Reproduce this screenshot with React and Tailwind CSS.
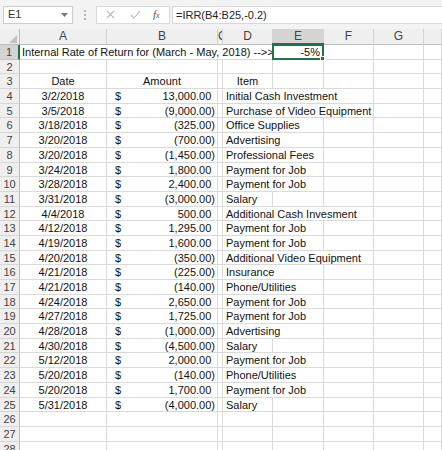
const rows = [
  ['3/2/2018', '13,000.00', false, 'Initial Cash Investment', 3],
  ['3/5/2018', '9,000.00', true, 'Purchase of Video Equipment', 3],
  ['3/18/2018', '325.00', true, 'Office Supplies', 2],
  ['3/20/2018', '700.00', true, 'Advertising', 2],
  ['3/20/2018', '1,450.00', true, 'Professional Fees', 2],
  ['3/24/2018', '1,800.00', false, 'Payment for Job', 2],
  ['3/28/2018', '2,400.00', false, 'Payment for Job', 2],
  ['3/31/2018', '3,000.00', true, 'Salary', 1],
  ['4/4/2018', '500.00', false, 'Additional Cash Invesment', 3],
  ['4/12/2018', '1,295.00', false, 'Payment for Job', 2],
  ['4/19/2018', '1,600.00', false, 'Payment for Job', 2],
  ['4/20/2018', '350.00', true, 'Additional Video Equipment', 3],
  ['4/21/2018', '225.00', true, 'Insurance', 2],
  ['4/21/2018', '140.00', true, 'Phone/Utilities', 2],
  ['4/24/2018', '2,650.00', false, 'Payment for Job', 2],
  ['4/27/2018', '1,725.00', false, 'Payment for Job', 2],
  ['4/28/2018', '1,000.00', true, 'Advertising', 2],
  ['4/30/2018', '4,500.00', true, 'Salary', 1],
  ['5/12/2018', '2,000.00', false, 'Payment for Job', 2],
  ['5/20/2018', '140.00', true, 'Phone/Utilities', 2],
  ['5/20/2018', '1,700.00', false, 'Payment for Job', 2],
  ['5/31/2018', '4,000.00', true, 'Salary', 1],
]

const cols = 'grid grid-cols-[20px_87px_111px_5px_50px_51px_50px_50px_1fr]'
const cell = 'border-r border-b border-[#dadada] h-[14.7px] leading-[14px] whitespace-nowrap overflow-hidden'

function RowHead({ n, active }) {
  return (
    <div
      className={`h-[14.7px] leading-[14px] border-b text-center text-[11px] text-[#444] ${
        active ? 'bg-[#d4d4d4] border-r-2 border-r-[#217346] border-b-[#c4c4c4]' : 'bg-[#efefef] border-r border-r-[#bcbcbc] border-b-[#d6d6d6]'
      }`}
    >
      {n}
    </div>
  )
}

function Blank({ span = '' }) {
  return <div className={`${cell} ${span}`} />
}

function ItemCell({ text, span }) {
  const spans = { 1: '', 2: 'col-span-2', 3: 'col-span-3' }
  const rest = 4 - span
  return (
    <>
      <div className={`${cell} ${spans[span]} pl-[3px]`}>{text}</div>
      {Array.from({ length: rest }).map((_, i) => (
        <Blank key={i} />
      ))}
      <Blank />
    </>
  )
}

function Amount({ value, neg }) {
  return (
    <div className={`${cell} flex justify-between pl-[8px] pr-[2px]`}>
      <span>$</span>
      <span>
        {neg ? `(${value})` : value}
        {!neg && <span className="invisible">)</span>}
      </span>
    </div>
  )
}

export default function App() {
  return (
    <div className="w-[442px] h-[450px] overflow-hidden bg-white font-['Liberation_Sans',Arial,sans-serif] text-[11px] text-[#111]">
      <div className="h-[29px] flex items-center bg-[#f3f3f3]">
        <div className="ml-[3px] w-[70px] h-[18px] bg-white border border-[#cdcdcd] flex items-center justify-between pl-[4px] pr-[4px] text-[11px] text-[#333]">
          <span>E1</span>
          <svg width="7" height="4" viewBox="0 0 7 4">
            <path d="M0 0h7L3.5 4z" fill="#777" />
          </svg>
        </div>
        <div className="w-[23px] flex flex-col items-center gap-[2px]">
          <span className="w-[2px] h-[2px] bg-[#b5b5b5]" />
          <span className="w-[2px] h-[2px] bg-[#b5b5b5]" />
          <span className="w-[2px] h-[2px] bg-[#b5b5b5]" />
        </div>
        <div className="w-[74px] h-[18px] bg-white border border-[#d9d9d9] flex items-center pl-[7px]">
          <svg width="9" height="9" viewBox="0 0 9 9" className="ml-[2px]">
            <path d="M1 1l7 7M8 1L1 8" stroke="#b8b8b8" strokeWidth="1.1" />
          </svg>
          <svg width="11" height="9" viewBox="0 0 11 9" className="ml-[15px]">
            <path d="M1 5l3 3 6-7" stroke="#b8b8b8" strokeWidth="1.1" fill="none" />
          </svg>
          <span className="ml-[12px] font-['Liberation_Serif',serif] italic text-[11px] text-[#555]">
            f<span className="text-[8px]">x</span>
          </span>
        </div>
        <div className="ml-[2px] flex-1 h-[18px] bg-white border border-[#d9d9d9] border-r-0 pl-[3px] leading-[16px] text-[11px] text-[#222]">
          =IRR(B4:B25,-0.2)
        </div>
      </div>

      <div className={`${cols} h-[16px] bg-[#efefef] text-[12px] text-[#444] leading-[15px] text-center border-b border-[#bcbcbc]`}>
        <div className="border-r border-[#bcbcbc] relative">
          <svg width="8" height="8" viewBox="0 0 8 8" className="absolute right-[2px] bottom-[2px]">
            <path d="M8 0v8H0z" fill="#c2c2c2" />
          </svg>
        </div>
        {['A', 'B', 'C', 'D'].map((c) => (
          <div key={c} className="border-r border-[#d3d3d3] overflow-hidden">
            {c}
          </div>
        ))}
        <div className="border-r border-[#d3d3d3] bg-[#d4d4d4] border-b-2 border-b-[#217346] -mb-px">E</div>
        {['F', 'G', ''].map((c, i) => (
          <div key={i} className="border-r border-[#d3d3d3]">
            {c}
          </div>
        ))}
      </div>

      <div className={cols}>
        <RowHead n={1} active />
        <div className={`${cell} col-span-4 pl-[2px]`}>Internal Rate of Return for (March - May, 2018) --&gt;&gt;</div>
        <div className="relative h-[14.7px] border-b border-r border-[#dadada]">
          <div className="absolute -left-px -top-[2px] -right-px -bottom-px border-2 border-[#217346] text-right pr-[2px] leading-[14px] z-10">
            -5%
            <span className="absolute -right-[3px] -bottom-[3px] w-[5px] h-[5px] bg-[#217346] border border-white" />
          </div>
        </div>
        <Blank />
        <Blank />
        <Blank />

        <RowHead n={2} />
        {Array.from({ length: 8 }).map((_, i) => (
          <Blank key={i} />
        ))}

        <RowHead n={3} />
        <div className={`${cell} text-center`}>Date</div>
        <div className={`${cell} text-center`}>Amount</div>
        <Blank />
        <div className={`${cell} text-center`}>Item</div>
        <Blank />
        <Blank />
        <Blank />
        <Blank />

        {rows.map(([date, amt, neg, item, span], i) => (
          <div key={i} className="contents">
            <RowHead n={i + 4} />
            <div className={`${cell} text-center`}>{date}</div>
            <Amount value={amt} neg={neg} />
            <Blank />
            <ItemCell text={item} span={span} />
          </div>
        ))}

        {[26, 27, 28].map((n) => (
          <div key={n} className="contents">
            <RowHead n={n} />
            {Array.from({ length: 8 }).map((_, i) => (
              <Blank key={i} />
            ))}
          </div>
        ))}
      </div>
    </div>
  )
}
